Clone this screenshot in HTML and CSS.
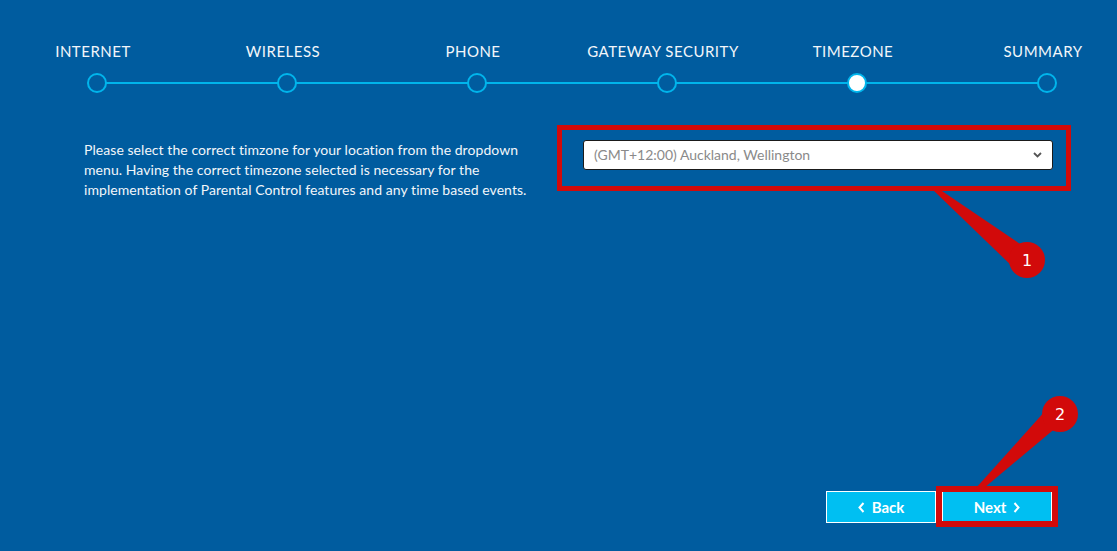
FILE: index.html
```html
<!DOCTYPE html>
<html>
    <head>
        <title>Setup - Timezone</title>
        <link rel="stylesheet" href="styles.css">
    </head>
    <body>
        <div class="page">
            <div class="steps">
                <div class="step first">
                    <div class="label">INTERNET</div>
                    <div class="node"><span class="dot"></span></div>
                </div>
                <div class="step">
                    <div class="label">WIRELESS</div>
                    <div class="node"><span class="dot"></span></div>
                </div>
                <div class="step">
                    <div class="label">PHONE</div>
                    <div class="node"><span class="dot"></span></div>
                </div>
                <div class="step">
                    <div class="label">GATEWAY SECURITY</div>
                    <div class="node"><span class="dot"></span></div>
                </div>
                <div class="step">
                    <div class="label">TIMEZONE</div>
                    <div class="node"><span class="dot active"></span></div>
                </div>
                <div class="step last">
                    <div class="label">SUMMARY</div>
                    <div class="node"><span class="dot"></span></div>
                </div>
            </div>

            <div class="content">
                <p class="intro">
                    Please select the correct timzone for your location from the dropdown
                    menu. Having the correct timezone selected is necessary for the
                    implementation of Parental Control features and any time based events.
                </p>
                <div class="select-wrap">
                    <div class="select">
                        <span>(GMT+12:00) Auckland, Wellington</span>
                        <svg width="9" height="6" viewBox="0 0 9 6"><path d="M1 1 L4.5 4.5 L8 1" fill="none" stroke="#555" stroke-width="1.8"/></svg>
                    </div>
                    <div class="mark mark-select"></div>
                </div>
            </div>

            <div class="footer">
                <div class="button back">
                    <svg width="7" height="11" viewBox="0 0 7 11"><path d="M5.5 1 L1.5 5.5 L5.5 10" fill="none" stroke="#fff" stroke-width="2"/></svg>
                    Back
                </div>
                <div class="button next">
                    Next
                    <svg width="7" height="11" viewBox="0 0 7 11"><path d="M1.5 1 L5.5 5.5 L1.5 10" fill="none" stroke="#fff" stroke-width="2"/></svg>
                    <div class="mark mark-next"></div>
                </div>
            </div>
        </div>

        <svg class="callouts" width="1117" height="551" viewBox="0 0 1117 551">
            <polygon points="932,189 939,189 1026,248 1016,270" fill="#d20a0a"/>
            <circle cx="1027" cy="260" r="18" fill="#d20a0a"/>
            <text x="1027" y="266" class="num">1</text>
            <polygon points="976,488 984,488 1058,426 1046,410" fill="#d20a0a"/>
            <circle cx="1060" cy="414" r="18" fill="#d20a0a"/>
            <text x="1060" y="420" class="num">2</text>
        </svg>
    </body>
</html>
```

FILE: styles.css
```css
html, body {
    margin: 0;
    height: 100%;
}
body {
    background: #005c9f;
    color: #f2f6fa;
    font-family: Lato, "Noto Sans", sans-serif;
    overflow: hidden;
    position: relative;
}
.page {
    min-height: 100vh;
    display: flex;
    flex-direction: column;
}
.steps {
    display: grid;
    grid-template-columns: repeat(6, 190px);
    margin-left: 2px;
    padding-top: 42px;
}
.step {
    display: flex;
    flex-direction: column;
    align-items: center;
}
.label {
    font-size: 15px;
    line-height: 18px;
    letter-spacing: 0.5px;
    padding-right: 8px;
    white-space: nowrap;
}
.node {
    position: relative;
    width: 100%;
    margin-top: 13px;
    display: flex;
    justify-content: center;
}
.node::before {
    content: '';
    position: absolute;
    top: 9px;
    left: 0;
    right: 0;
    height: 2px;
    background: #00b5ec;
}
.first .node::before {
    left: 50%;
}
.last .node::before {
    right: 50%;
}
.dot {
    position: relative;
    width: 16px;
    height: 16px;
    border: 2px solid #00b5ec;
    border-radius: 50%;
    background: #005c9f;
}
.dot.active {
    background: #fff;
}
.content {
    display: flex;
    align-items: flex-start;
    padding-left: 84px;
    margin-top: 47px;
}
.intro {
    margin: 0;
    width: 455px;
    font-size: 14px;
    letter-spacing: 0.06px;
    line-height: 20px;
}
.select-wrap {
    position: relative;
    margin-left: 44px;
}
.select {
    box-sizing: border-box;
    width: 470px;
    height: 30px;
    border: 1px solid #1a1a1a;
    border-radius: 3px;
    background: #fff;
    display: flex;
    align-items: center;
    justify-content: space-between;
    padding: 0 10px 1px;
    color: #8a8a8a;
    font-size: 14px;
}
.mark {
    position: absolute;
    border: 5px solid #d20a0a;
}
.mark-select {
    left: -26px;
    top: -15px;
    right: -18px;
    bottom: -21px;
}
.footer {
    margin-top: auto;
    display: flex;
    justify-content: flex-end;
    gap: 6px;
    padding-right: 65px;
    padding-bottom: 28px;
}
.button {
    position: relative;
    width: 110px;
    height: 32px;
    box-sizing: border-box;
    border: 1px solid #fff;
    background: #00bff2;
    color: #fff;
    font-size: 15px;
    font-weight: 700;
    display: flex;
    align-items: center;
    justify-content: center;
    gap: 7px;
}
.mark-next {
    left: -7px;
    top: -6px;
    right: -7px;
    bottom: -5px;
    border-width: 6px;
}
.callouts {
    position: absolute;
    top: 0;
    left: 0;
    pointer-events: none;
}
.num {
    fill: #fff;
    font-family: "DejaVu Sans", sans-serif;
    font-size: 16px;
    text-anchor: middle;
}
```
